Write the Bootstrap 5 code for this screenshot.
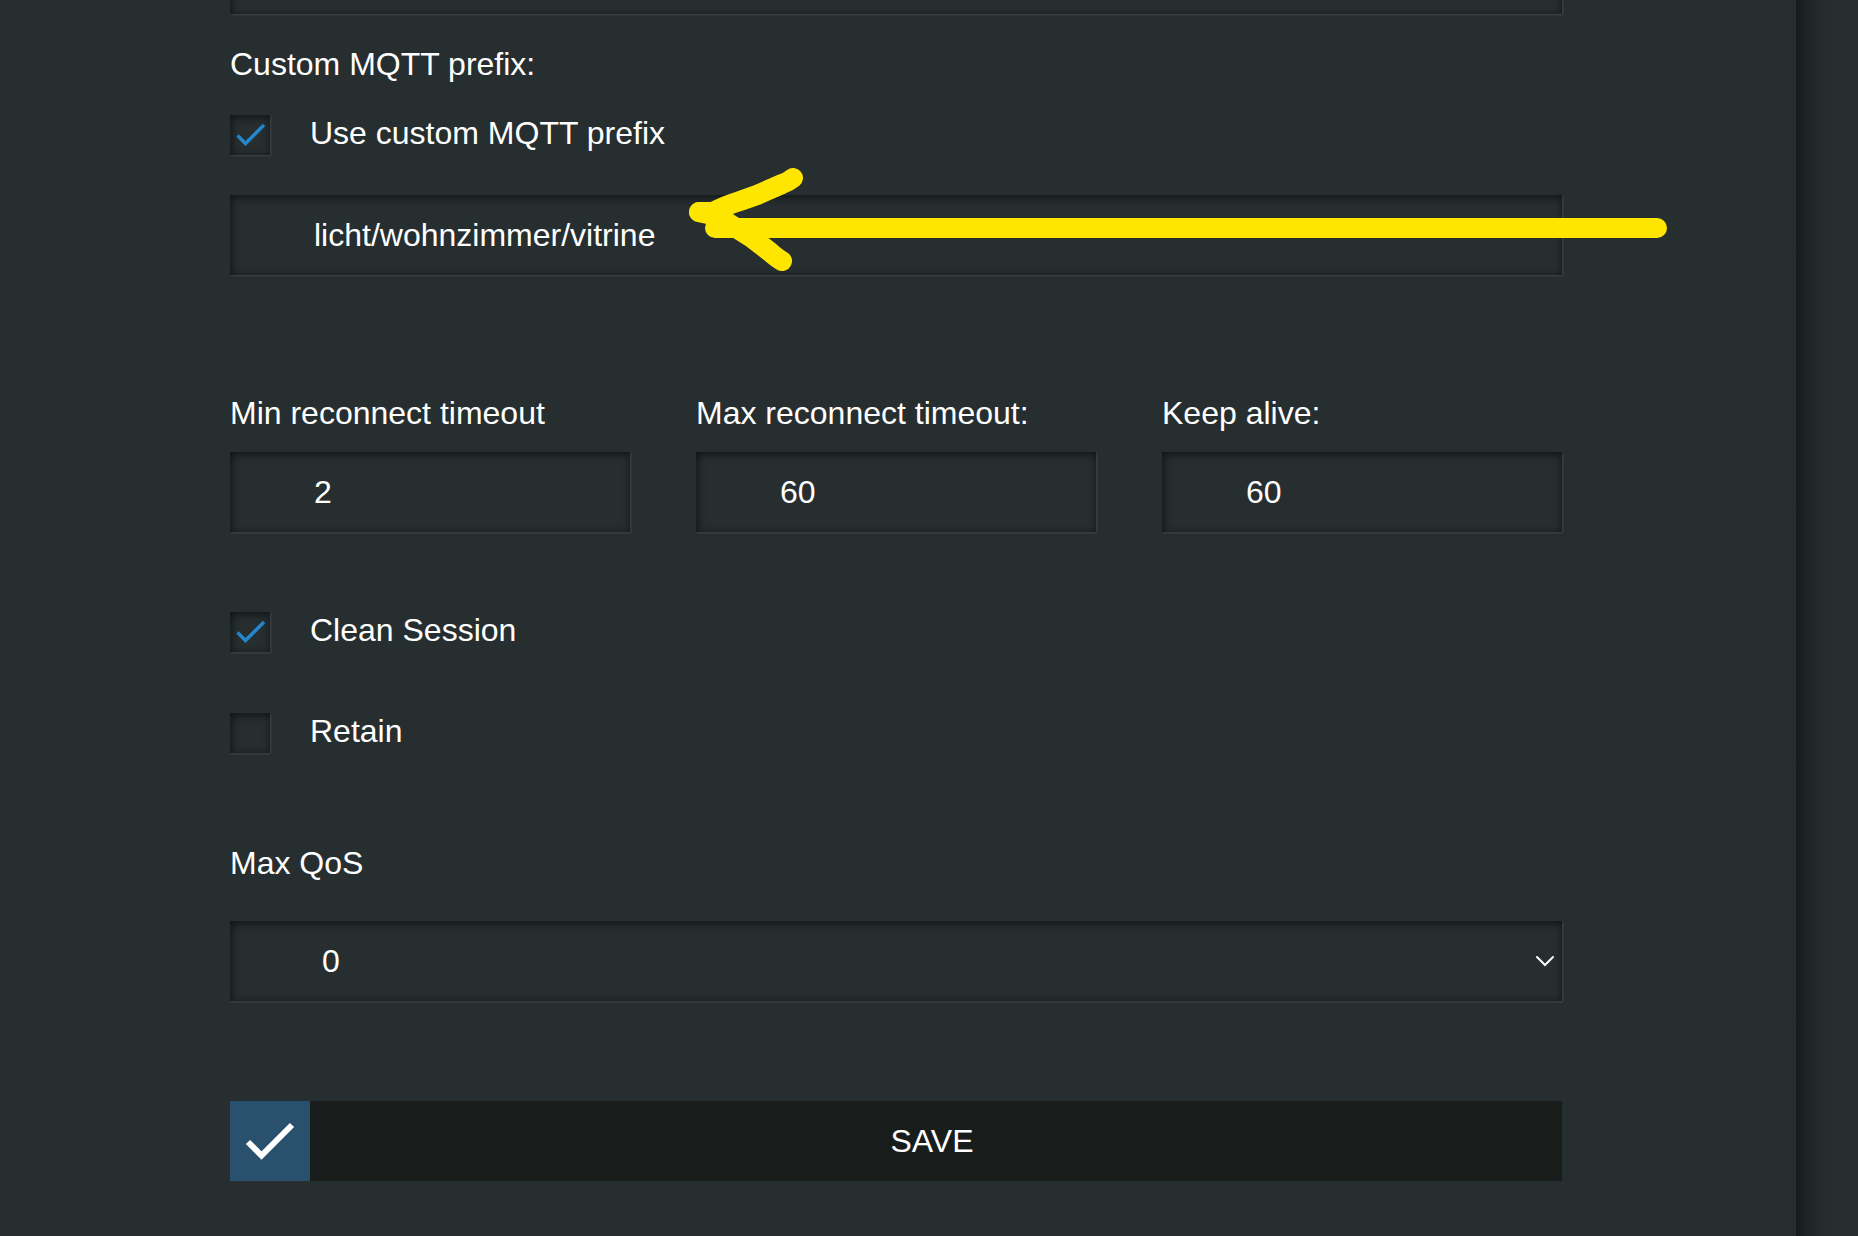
<!DOCTYPE html>
<html lang="en">
<head>
<meta charset="utf-8">
<meta name="viewport" content="width=device-width, initial-scale=1">
<title>MQTT settings</title>
<link href="https://cdn.jsdelivr.net/npm/bootstrap@5.3.0/dist/css/bootstrap.min.css" rel="stylesheet">
<style>
  body {
    background: #262e30;
    color: #fff;
    font-family: "Liberation Sans", Arial, sans-serif;
    font-size: 32px;
    line-height: 36px;
    overflow-x: hidden;
  }
  .panel { padding: 0 234px 54px 230px; }
  .page-edge {
    width: 62px;
    background: linear-gradient(to right, #171b1b 0, #1c2021 8px, #22282a 18px, #272c2f 30px, #262e30 60px);
  }
  /* the form is scrolled: only the foot of its first field shows */
  .panel form { margin-top: -66px; }
  .field, .tick.form-check-input {
    border: 0;
    border-radius: 0;
    background-color: #262e30;
    color: #fff;
    box-shadow: inset 1px 2px 8px #000000a0, 1px 1px 2px #404549;
  }
  .field {
    height: 80px;
    padding: 0 84px;
    font-size: 32px;
    line-height: 36px;
  }
  .field:focus { background-color: #262e30; color: #fff; }
  select.field {
    padding-left: 92px;
    background-image: url("data:image/svg+xml,%3Csvg xmlns='http://www.w3.org/2000/svg' viewBox='0 0 20 12'%3E%3Cpath d='M2 2l8 8 8-8' fill='none' stroke='white' stroke-width='2' stroke-linecap='round'/%3E%3C/svg%3E");
    background-position: right 7px center;
    background-size: 20px 12px;
  }
  .tick.form-check-input { width: 40px; height: 40px; margin: 0; }
  .tick.form-check-input:checked {
    background-image: url("data:image/svg+xml,%3Csvg xmlns='http://www.w3.org/2000/svg' viewBox='0 0 40 40'%3E%3Cpath d='M7.500 20.500L15.500 28.500L34 10' fill='none' stroke='%232686cb' stroke-width='3.500'/%3E%3C/svg%3E");
    background-size: 40px 40px;
  }
  .tick-row { gap: 40px; }
  .trio { --bs-gutter-x: 66px; }
  .gap-s { margin-bottom: 21px; }
  .gap-first { margin-bottom: 32px; }
  .gap-label { margin-bottom: 33px; }
  .gap-m { margin-bottom: 40px; }
  .gap-l { margin-bottom: 61px; }
  .gap-xl { margin-bottom: 80px; }
  .gap-qos { margin-bottom: 92px; }
  .gap-save { margin-bottom: 100px; }
  .gap-xxl { margin-bottom: 120px; }
  .save {
    height: 80px;
    border: 0;
    border-radius: 0;
    background: #181d1c;
    color: #fff;
    font-size: 32px;
    line-height: 36px;
  }
  .save:hover { background: #101413; color: #fff; }
  .save-icon { width: 80px; height: 80px; background: #29506c; }
  .save-text { padding-right: 8px; }
  .arrow {
    left: 450px;
    top: -35px;
    width: 1000px;
    height: 120px;
    pointer-events: none;
    z-index: 2;
  }
</style>
</head>
<body>
<div class="d-flex min-vh-100 overflow-hidden">
<main class="panel flex-grow-1">
  <form>
    <input class="form-control field gap-first" type="text" aria-label="MQTT client id">

    <div class="gap-label">Custom MQTT prefix:</div>

    <div class="d-flex align-items-start tick-row gap-m">
      <input class="form-check-input tick" type="checkbox" id="usePrefix" checked>
      <label for="usePrefix">Use custom MQTT prefix</label>
    </div>

    <div class="position-relative gap-xxl">
      <input class="form-control field" type="text" aria-label="Custom MQTT prefix" value="licht/wohnzimmer/vitrine">
      <svg class="arrow position-absolute" viewBox="0 0 1000 120" fill="none" stroke="#ffe600" stroke-width="20" stroke-linecap="round" stroke-linejoin="round" aria-hidden="true">
        <path d="M35 68H977"/>
        <path d="M113 18Q108 22 102 24L77 35L60 41Q44 46 33 52L19 52"/>
        <path d="M19 52Q38 55 53 66L72 78L90 92Q98 99 102 101"/>
      </svg>
    </div>

    <div class="row trio gap-xl">
      <div class="col-4">
        <label class="d-block gap-s" for="minTimeout">Min reconnect timeout</label>
        <input class="form-control field" type="text" id="minTimeout" value="2">
      </div>
      <div class="col-4">
        <label class="d-block gap-s" for="maxTimeout">Max reconnect timeout:</label>
        <input class="form-control field" type="text" id="maxTimeout" value="60">
      </div>
      <div class="col-4">
        <label class="d-block gap-s" for="keepAlive">Keep alive:</label>
        <input class="form-control field" type="text" id="keepAlive" value="60">
      </div>
    </div>

    <div class="d-flex align-items-start tick-row gap-l">
      <input class="form-check-input tick" type="checkbox" id="cleanSession" checked>
      <label for="cleanSession">Clean Session</label>
    </div>

    <div class="d-flex align-items-start tick-row gap-qos">
      <input class="form-check-input tick" type="checkbox" id="retain">
      <label for="retain">Retain</label>
    </div>

    <label class="d-block gap-m" for="maxQos">Max QoS</label>
    <select class="form-select field gap-save" id="maxQos">
      <option selected>0</option>
      <option>1</option>
      <option>2</option>
    </select>

    <button class="btn save w-100 p-0 d-flex align-items-center" type="submit">
      <span class="save-icon flex-shrink-0">
        <svg class="d-block" width="80" height="80" viewBox="0 0 80 80" fill="none" stroke="#fff" stroke-width="6" aria-hidden="true"><path d="M18 41L31.500 54.500L62 24"/></svg>
      </span>
      <span class="save-text flex-grow-1 text-center">SAVE</span>
    </button>
  </form>
</main>
<div class="page-edge flex-shrink-0"></div>
</div>
<script src="https://cdn.jsdelivr.net/npm/bootstrap@5.3.0/dist/js/bootstrap.bundle.min.js"></script>
</body>
</html>
